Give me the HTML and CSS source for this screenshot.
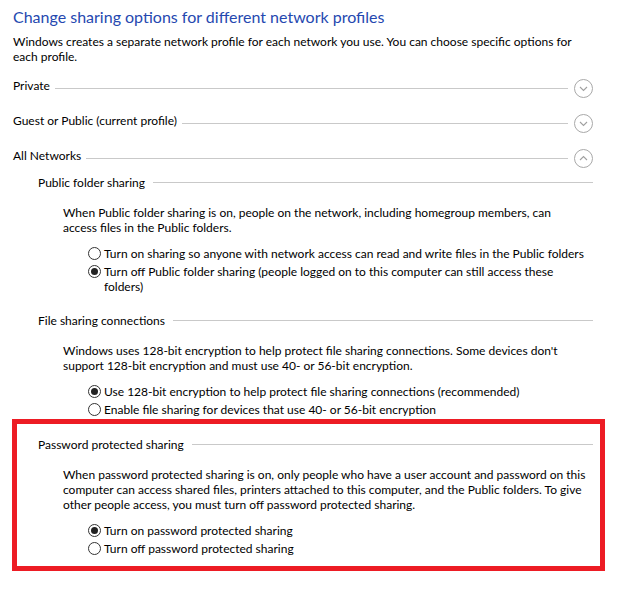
FILE: index.html
```html
<!DOCTYPE html>
<html>
<head>
<meta charset="utf-8">
<title>Advanced sharing settings</title>
<link rel="stylesheet" href="styles.css">
</head>
<body>
<main class="page">
  <h1 class="title">Change sharing options for different network profiles</h1>
  <p class="intro">Windows creates a separate network profile for each network you use. You can choose specific options for each profile.</p>

  <div class="profiles">
    <div class="profile-row">
      <span class="profile-name">Private</span>
      <span class="rule"></span>
      <svg class="toggle" width="19" height="19" viewBox="0 0 19 19"><circle cx="9.5" cy="9.5" r="9" fill="none" stroke="#a8a8a8"/><polyline points="6,8 9.5,11.5 13,8" fill="none" stroke="#a0a0a0" stroke-width="1.1"/></svg>
    </div>
    <div class="profile-row">
      <span class="profile-name">Guest or Public (current profile)</span>
      <span class="rule"></span>
      <svg class="toggle" width="19" height="19" viewBox="0 0 19 19"><circle cx="9.5" cy="9.5" r="9" fill="none" stroke="#a8a8a8"/><polyline points="6,8 9.5,11.5 13,8" fill="none" stroke="#a0a0a0" stroke-width="1.1"/></svg>
    </div>
    <div class="profile-row">
      <span class="profile-name">All Networks</span>
      <span class="rule"></span>
      <svg class="toggle" width="19" height="19" viewBox="0 0 19 19"><circle cx="9.5" cy="9.5" r="9" fill="none" stroke="#a8a8a8"/><polyline points="6,11 9.5,7.5 13,11" fill="none" stroke="#a0a0a0" stroke-width="1.1"/></svg>
    </div>
  </div>

  <div class="sections">
    <section class="sub">
      <div class="sub-head"><span class="sub-name">Public folder sharing</span><span class="sub-rule"></span></div>
      <p class="para">When Public folder sharing is on, people on the network, including homegroup members, can<br>access files in the Public folders.</p>
      <div class="options">
        <label class="option"><span class="radio"></span><span class="opt-text">Turn on sharing so anyone with network access can read and write files in the Public folders</span></label>
        <label class="option"><span class="radio checked"></span><span class="opt-text">Turn off Public folder sharing (people logged on to this computer can still access these folders)</span></label>
      </div>
    </section>

    <section class="sub">
      <div class="sub-head"><span class="sub-name">File sharing connections</span><span class="sub-rule"></span></div>
      <p class="para">Windows uses 128-bit encryption to help protect file sharing connections. Some devices don't support 128-bit encryption and must use 40- or 56-bit encryption.</p>
      <div class="options">
        <label class="option"><span class="radio checked"></span><span class="opt-text">Use 128-bit encryption to help protect file sharing connections (recommended)</span></label>
        <label class="option"><span class="radio"></span><span class="opt-text">Enable file sharing for devices that use 40- or 56-bit encryption</span></label>
      </div>
    </section>

    <div class="highlight">
      <section class="sub">
        <div class="sub-head"><span class="sub-name">Password protected sharing</span><span class="sub-rule"></span></div>
        <p class="para">When password protected sharing is on, only people who have a user account and password on this computer can access shared files, printers attached to this computer, and the Public folders. To give other people access, you must turn off password protected sharing.</p>
        <div class="options">
          <label class="option"><span class="radio checked"></span><span class="opt-text">Turn on password protected sharing</span></label>
          <label class="option"><span class="radio"></span><span class="opt-text">Turn off password protected sharing</span></label>
        </div>
      </section>
    </div>
  </div>
</main>
</body>
</html>
```
FILE: styles.css
```css
html, body {
  margin: 0;
  padding: 0;
  background: #ffffff;
}

body {
  font-family: Lato, "Liberation Sans", sans-serif;
  font-size: 12px;
  line-height: 15px;
  color: #000000;
}

.page {
  padding: 7px 33px 30px 13px;
}

.title {
  margin: 0;
  font-size: 16px;
  line-height: 20px;
  font-weight: 400;
  color: #2548b0;
}

.intro {
  margin: 7px 0 0;
}

.profiles {
  margin-top: 14px;
  display: flex;
  flex-direction: column;
  gap: 15px;
}

.profile-row {
  display: flex;
  align-items: flex-start;
  height: 20px;
}

.profile-name {
  white-space: nowrap;
}

.rule {
  flex: 1;
  margin: 10px 6px 0 5px;
  border-top: 1px solid #c9c9c9;
}

.toggle {
  display: block;
  flex: none;
  margin-top: 1px;
}

.sections {
  margin-top: 7px;
  display: flex;
  flex-direction: column;
  gap: 19px;
}

.sub {
  padding-left: 25px;
}

.sub-head {
  display: flex;
  align-items: flex-start;
}

.sub-name {
  white-space: nowrap;
}

.sub-rule {
  flex: 1;
  margin: 7px 0 0 8px;
  border-top: 1px solid #c9c9c9;
}

.para {
  margin: 15px 0 0;
  padding-left: 25px;
}

.options {
  margin-top: 11px;
  padding-left: 50px;
  display: flex;
  flex-direction: column;
  gap: 3px;
}

.option {
  display: flex;
  align-items: flex-start;
}

.radio {
  flex: none;
  box-sizing: border-box;
  width: 13px;
  height: 13px;
  margin: 1px 3px 0 0;
  border: 1px solid #333333;
  border-radius: 50%;
  display: flex;
  align-items: center;
  justify-content: center;
}

.radio.checked::before {
  content: "";
  width: 7px;
  height: 7px;
  border-radius: 50%;
  background: #222222;
}

.highlight {
  position: relative;
  margin-top: 1px;
}

.highlight::after {
  content: "";
  position: absolute;
  top: -18px;
  bottom: -15px;
  left: -1px;
  right: -12px;
  border: 5px solid #ed1c24;
  pointer-events: none;
}
```
